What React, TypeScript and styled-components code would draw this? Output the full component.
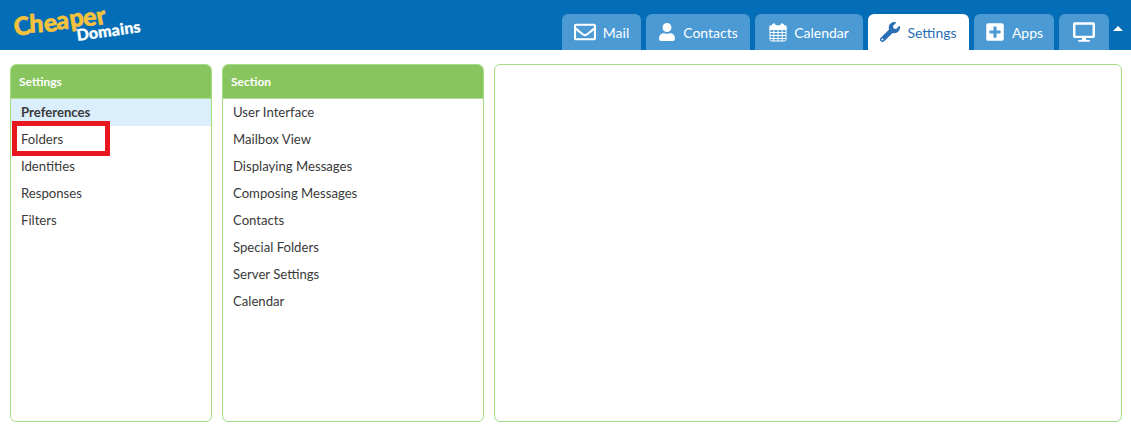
import React from "react";
import styled, { createGlobalStyle } from "styled-components";
import { FaRegEnvelope, FaUser, FaWrench, FaPlusSquare, FaDesktop } from "react-icons/fa";

const Global = createGlobalStyle`
  html, body { margin: 0; padding: 0; background: #fff; }
  body { font-family: Lato, "Open Sans", sans-serif; }
`;
const Page = styled.div`
  width: 1131px; height: 432px; display: flex; flex-direction: column; overflow: hidden;
`;
const Header = styled.header`
  height: 50px; background: #046db8; display: flex; justify-content: space-between; align-items: flex-end; flex: none;
`;
const Logo = styled.div`
  position: relative; width: 150px; height: 50px; flex: none;
`;
const LogoMain = styled.div`
  position: absolute; left: 15px; top: 12px; font: 900 25px/26px Lato, sans-serif; color: #f5c33b;
  letter-spacing: -0.2px; -webkit-text-stroke: 0.6px #f5c33b;
  transform: rotate(-7deg); transform-origin: left bottom; white-space: nowrap;
`;
const LogoSub = styled.div`
  position: absolute; left: 78px; top: 25px; font: 900 16px/20px Lato, sans-serif; color: #fff;
  letter-spacing: 0.15px; -webkit-text-stroke: 0.3px #fff;
  transform: rotate(-8deg); transform-origin: left bottom; white-space: nowrap;
`;
const Letter = styled.span<{ $r: number; $y: number }>`
  display: inline-block; transform: translateY(${p => p.$y}px) rotate(${p => p.$r}deg);
`;
const Tabs = styled.nav`
  display: flex; gap: 5px; align-items: flex-end; padding-right: 8px;
`;
const Tab = styled.div<{ $active?: boolean; $w: number }>`
  width: ${p => p.$w}px; height: 36px; box-sizing: border-box; border-radius: 6px 6px 0 0;
  background: ${p => (p.$active ? "#fff" : "#4b9ad4")}; color: ${p => (p.$active ? "#2a6fb5" : "#fff")};
  display: flex; align-items: center; justify-content: center; gap: 7px; font-size: 14px;
`;
const Caret = styled.span`
  width: 0; height: 0; border: 5px solid transparent; border-top: 0; border-bottom: 5px solid #fff;
  margin-left: -1px; align-self: center; margin-top: -8px;
`;
const Main = styled.main`
  flex: 1; display: flex; gap: 10px; padding: 14px 9px 10px 10px; min-height: 0;
`;
const Panel = styled.section<{ $w?: number }>`
  ${p => (p.$w ? `width:${p.$w}px; flex:none;` : "flex:1;")}
  box-sizing: border-box; border: 1px solid #a6dd84; border-radius: 6px; overflow: hidden; position: relative;
`;
const PanelTitle = styled.h2`
  margin: 0; height: 34px; box-sizing: border-box; background: #88c55e; border-bottom: 1px solid #b5dc9c;
  color: #fff; font: 700 12px/34px Lato, sans-serif; padding-left: 8px;
`;
const List = styled.ul`
  margin: 0; padding: 0; list-style: none;
`;
const Row = styled.li<{ $selected?: boolean }>`
  height: 27px; line-height: 27px; padding-left: 10px; font-size: 13.15px; color: #3a3a3a;
  font-weight: ${p => (p.$selected ? 700 : 400)};
  background: ${p => (p.$selected ? "#daeefc" : "transparent")};
`;
const Highlight = styled.div`
  position: absolute; left: 12px; top: 121px; width: 98px; height: 35px; box-sizing: border-box;
  border: 5px solid #e8171f; pointer-events: none;
`;

const CalendarIcon = () => (
  <svg width="18" height="19" viewBox="0 0 18 19" fill="none" stroke="currentColor" strokeWidth="1">
    <rect x="1" y="3" width="16" height="15" rx="1.5" fill="none" />
    <rect x="1" y="3" width="16" height="3.5" fill="currentColor" />
    <path d="M1 9.5h16M1 12.5h16M1 15.5h16M4.8 6.5v11.5M9 6.5v11.5M13.2 6.5v11.5" />
    <rect x="3.5" y="0.8" width="2.6" height="4.4" rx="1.2" fill="currentColor" />
    <rect x="11.9" y="0.8" width="2.6" height="4.4" rx="1.2" fill="currentColor" />
  </svg>
);

const tabs = [
  { label: "Mail", w: 79, icon: <FaRegEnvelope size={22} /> },
  { label: "Contacts", w: 104, icon: <FaUser size={18} /> },
  { label: "Calendar", w: 108, icon: <CalendarIcon /> },
  { label: "Settings", w: 101, icon: <FaWrench size={20} />, active: true },
  { label: "Apps", w: 80, icon: <FaPlusSquare size={20} /> },
  { label: "", w: 50, icon: <FaDesktop size={22} /> },
];
const settings = ["Preferences", "Folders", "Identities", "Responses", "Filters"];
const sections = ["User Interface", "Mailbox View", "Displaying Messages", "Composing Messages", "Contacts", "Special Folders", "Server Settings", "Calendar"];
const wobble: [string, number, number][] = [
  ["C", -6, 1], ["h", 4, 0], ["e", -4, 1], ["a", 5, 0], ["p", -3, -1], ["e", 4, 0], ["r", -5, 0],
];

export default function App() {
  return (
    <Page>
      <Global />
      <Header>
        <Logo>
          <LogoMain>
            {wobble.map(([c, r, y], i) => (
              <Letter key={i} $r={r} $y={y}>{c}</Letter>
            ))}
          </LogoMain>
          <LogoSub>Domains</LogoSub>
        </Logo>
        <Tabs>
          {tabs.map(t => (
            <Tab key={t.w} $w={t.w} $active={t.active}>
              {t.icon}
              {t.label && <span>{t.label}</span>}
            </Tab>
          ))}
          <Caret />
        </Tabs>
      </Header>
      <Main>
        <Panel $w={202}>
          <PanelTitle>Settings</PanelTitle>
          <List>
            {settings.map((s, i) => (
              <Row key={s} $selected={i === 0}>{s}</Row>
            ))}
          </List>
        </Panel>
        <Panel $w={262}>
          <PanelTitle>Section</PanelTitle>
          <List>
            {sections.map(s => (
              <Row key={s}>{s}</Row>
            ))}
          </List>
        </Panel>
        <Panel />
      </Main>
      <Highlight />
    </Page>
  );
}
